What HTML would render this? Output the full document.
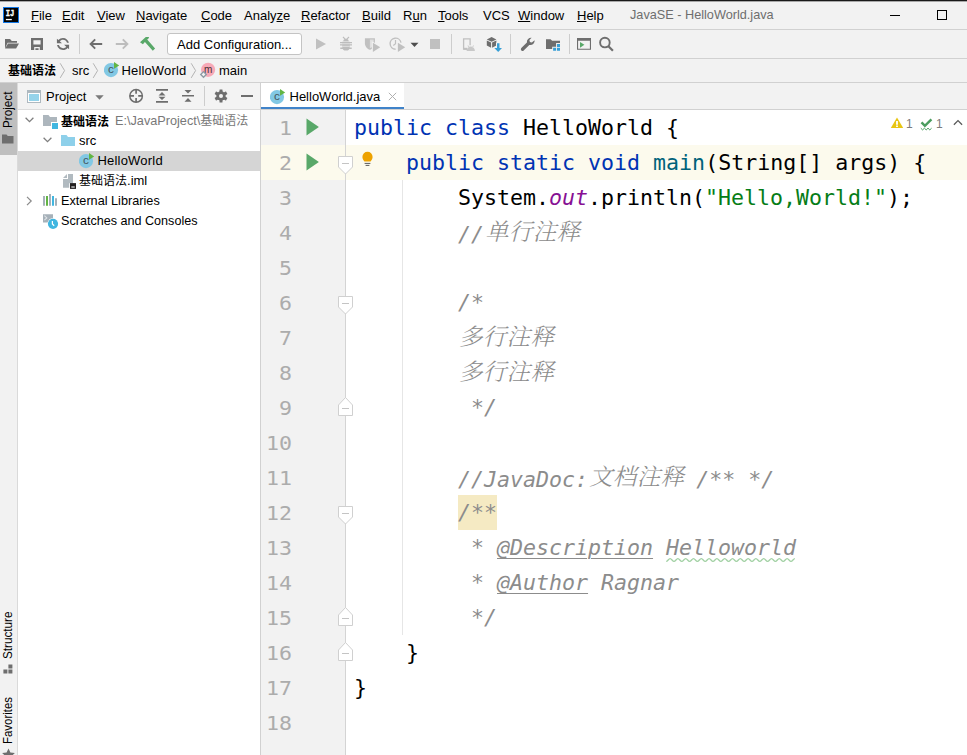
<!DOCTYPE html>
<html lang="zh">
<head>
<meta charset="utf-8">
<title>JavaSE - HelloWorld.java</title>
<style>
html,body{margin:0;padding:0;}
body{width:967px;height:755px;overflow:hidden;background:#f2f2f2;position:relative;
 font-family:"Liberation Sans","Noto Sans CJK SC",sans-serif;font-size:13px;color:#000;}
.abs{position:absolute;}
.hl{position:absolute;height:1px;background:#d1d1d1;left:0;}
.vl{position:absolute;width:1px;background:#d1d1d1;}
u{text-decoration:underline;text-underline-offset:1px;}
/* menu */
#menubar{position:absolute;left:0;top:2px;width:967px;height:27px;}
#menubar span{position:absolute;top:0;line-height:27px;white-space:nowrap;font-size:13px;}
#title{color:#6e6e6e;}
/* toolbar */
#toolbar{position:absolute;left:0;top:30px;width:967px;height:28px;}
#addcfg{position:absolute;left:167px;top:3px;width:135px;height:22px;border:1px solid #c4c4c4;border-radius:3px;background:#fff;
 box-sizing:border-box;font-size:13px;line-height:22px;text-align:center;white-space:nowrap;}
/* nav */
#nav{position:absolute;left:0;top:59px;width:967px;height:23px;}
#nav span{position:absolute;top:0;line-height:23px;white-space:nowrap;font-size:13px;}
/* stripe */
#stripe{position:absolute;left:0;top:83px;width:17px;height:672px;background:#f2f2f2;}
.vtext{position:absolute;white-space:nowrap;transform-origin:0 0;transform:rotate(-90deg) scaleX(.9);font-size:13px;line-height:18px;}
/* project */
#proj{position:absolute;left:18px;top:83px;width:242px;height:672px;background:#fff;}
#projhead{position:absolute;left:0;top:0;width:242px;height:26px;background:#f3f3f3;border-bottom:1px solid #dcdcdc;}
#projin{position:absolute;left:1px;top:0;}
.row{position:absolute;left:-1px;width:242px;height:20px;line-height:20px;font-size:13px;white-space:nowrap;}
.row span{position:absolute;top:0;margin-left:1px;}
.row svg{position:absolute;margin-left:1px;}
/* editor */
#editor{position:absolute;left:261px;top:83px;width:706px;height:672px;background:#fff;}
#tabs{position:absolute;left:0;top:0;width:706px;height:26px;background:#f2f2f2;}
#gutter{position:absolute;left:0;top:27px;width:84px;height:645px;background:#f2f2f2;}
.ln{position:absolute;right:53px;width:60px;text-align:right;color:#acacac;}
pre,.ln{font-family:"DejaVu Sans Mono","Liberation Mono","Noto Sans CJK SC",monospace;font-size:21.6px;line-height:35px;margin:0;}
.ln{height:35px;transform:scaleY(.9);transform-origin:0 25px;}
#code{position:absolute;left:93px;top:27px;}
#code div{height:35px;white-space:pre;}
.k{color:#0033b3;}
.m{color:#00627a;}
.s{color:#067d17;}
.f{color:#871094;font-style:italic;}
.c{color:#8c8c8c;font-style:italic;}
.z{font-family:"Noto Serif CJK SC","Noto Sans CJK SC",serif;font-weight:300;font-size:23.500px;line-height:35px;letter-spacing:.3px;position:relative;top:-2px;left:1px;}
.hb{background:#f5eac3;display:inline-block;height:35px;}
.tag{text-decoration:underline;text-decoration-thickness:1px;text-underline-offset:3px;}
.typo{}
</style>
</head>
<body>
<div class="abs" style="left:0;top:0;width:967px;height:1px;background:#1a1a1a"></div>
<div class="abs" style="left:0;top:1px;width:967px;height:1px;background:#a8a8a8"></div>

<!-- LOGO -->
<svg class="abs" style="left:3px;top:7px" width="16" height="16" viewBox="0 0 16 16"><rect x=".5" y=".5" width="15" height="15" fill="#000" stroke="#1478e6" stroke-width="1"/><text x="2.700" y="8.600" font-family="Liberation Mono,monospace" font-weight="bold" font-size="8.600" fill="#fff" stroke="#fff" stroke-width=".35" textLength="8.500" lengthAdjust="spacingAndGlyphs">IJ</text><rect x="2.900" y="11.900" width="5.900" height="1.300" fill="#fff"/></svg>
<div class="abs" style="left:890px;top:15px;width:10px;height:1px;background:#000"></div>
<div class="abs" style="left:937px;top:10px;width:10px;height:10px;box-sizing:border-box;border:1px solid #000"></div>
<!-- MENU BAR -->
<div id="menubar">
 <span style="left:31px"><u>F</u>ile</span>
 <span style="left:62px"><u>E</u>dit</span>
 <span style="left:97px"><u>V</u>iew</span>
 <span style="left:136px"><u>N</u>avigate</span>
 <span style="left:201px"><u>C</u>ode</span>
 <span style="left:244px">Analy<u>z</u>e</span>
 <span style="left:301px"><u>R</u>efactor</span>
 <span style="left:362px"><u>B</u>uild</span>
 <span style="left:403px">R<u>u</u>n</span>
 <span style="left:438px"><u>T</u>ools</span>
 <span style="left:483px">VCS</span>
 <span style="left:518px"><u>W</u>indow</span>
 <span style="left:577px"><u>H</u>elp</span>
 <span id="title" style="left:630px;font-size:12.700px">JavaSE - HelloWorld.java</span>
</div>
<div class="hl" style="top:29px;width:967px"></div>

<!-- TOOLBAR -->
<div id="toolbar">
 <!-- open -->
 <svg class="abs" style="left:4px;top:6px" width="16" height="16" viewBox="0 0 16 16"><path fill="#6e6e6e" d="M1 12.500V3h5l1.800 1.900H13v1.900H3.600L1 12.500zM4 7.600h11l-2.900 4.900H1.100z"/></svg>
 <!-- save -->
 <svg class="abs" style="left:29px;top:6px" width="16" height="16" viewBox="0 0 16 16"><path fill="#6e6e6e" fill-rule="evenodd" d="M2 2h12v12H2zM4.400 4.200v4.300h7.200V4.200zM5.200 11v3h5.600v-3zM6.400 12.200h3.200V14H6.400z"/></svg>
 <!-- refresh -->
 <svg class="abs" style="left:55px;top:6px" width="16" height="16" viewBox="0 0 16 16"><path fill="#6e6e6e" fill-rule="evenodd" d="M12.570 11.890C11.470 13.180 9.830 14 8 14 5.040 14 2.580 11.860 2.090 9.040l1.860.07C4.430 10.890 6.060 12.200 8 12.200c1.300 0 2.460-.59 3.230-1.520L9.050 8.710h5.040v4.540l-1.520-1.360zM3.430 4.120C4.530 2.820 6.170 2 8 2c2.920 0 5.350 2.090 5.890 4.850l-1.870-.06C11.500 5.060 9.900 3.800 8 3.800c-1.300 0-2.460.59-3.230 1.520l2.190 1.970H1.910V2.750l1.520 1.370z"/></svg>
 <div class="vl" style="left:79px;top:4px;height:20px;background:#cdcdcd"></div>
 <!-- back -->
 <svg class="abs" style="left:88px;top:6px" width="16" height="16" viewBox="0 0 16 16"><path fill="none" stroke="#6e6e6e" stroke-width="1.9" d="M14.2 8H3M7.2 3.4L2.6 8l4.6 4.6"/></svg>
 <!-- forward -->
 <svg class="abs" style="left:114px;top:6px" width="16" height="16" viewBox="0 0 16 16"><path fill="none" stroke="#bdbdbd" stroke-width="1.9" d="M1.8 8H13M8.8 3.4L13.4 8l-4.6 4.6"/></svg>
 <!-- hammer -->
 <svg class="abs" style="left:139px;top:6px" width="18" height="16" viewBox="0 0 18 16"><path fill="#59a869" d="M1 6.300L6.800 1.100h3.300l-.6 1.300-1.300 1.200 7.900 8.800-2.300 2.400L5.900 6l-2 2.300z"/></svg>
 <div id="addcfg">Add Configuration...</div>
 <!-- run -->
 <svg class="abs" style="left:313px;top:6px" width="16" height="16" viewBox="0 0 16 16"><path fill="#c0c0c0" d="M3 2.5l10 5.5-10 5.5z"/></svg>
 <!-- debug -->
 <svg class="abs" style="left:338px;top:6px" width="16" height="16" viewBox="0 0 16 16"><g fill="#bdbdbd"><path d="M5.300 5.300a2.700 2.600 0 0 1 5.400 0z"/><path d="M4.300 5.700h7.400v5.200a3.700 3.700 0 0 1-7.400 0z"/><path d="M2 6h12v1.300H2zM2 8.300h12v1.300H2zM2.300 11.500h11.400v1.400H2.300zM4.600 1.400l.8-.8 2.400 2.400-.8.800zM11.400 1.400l-.8-.8-2.400 2.400.8.800z"/></g><path stroke="#f2f2f2" stroke-width=".7" d="M4.300 7.750h7.400M4.300 10.300h7.400"/></svg>
 <!-- coverage -->
 <svg class="abs" style="left:363px;top:6px" width="18" height="17" viewBox="0 0 18 17"><path fill="#c0c0c0" d="M1.900 2.200h10v5c0 3.500-2.500 5.600-5 6.600-2.500-1-5-3.100-5-6.600z"/><path fill="#e0e0e0" d="M6.900 3.400h3.800v3.800c0 2.400-1.600 4-3.800 5z"/><path fill="#f2f2f2" d="M8.800 5.300l9.200 5v3.700l-9.200 3z"/><path fill="#c0c0c0" d="M9.900 6.700l7.300 4.600-7.300 4.600z"/></svg>
 <!-- profile -->
 <svg class="abs" style="left:387.700px;top:6px" width="18" height="17" viewBox="0 0 18 17"><path fill="none" stroke="#c0c0c0" stroke-width="1.400" d="M7.600 13.200A5.500 5.500 0 1 1 13 6.600"/><path fill="none" stroke="#c0c0c0" stroke-width="1.200" d="M7.500 4v3.800l-2.200 1.700"/><path fill="#c0c0c0" d="M9.900 6.700l7.300 4.600-7.300 4.600z"/></svg>
 <svg class="abs" style="left:410px;top:12px" width="9" height="6" viewBox="0 0 9 6"><path fill="#4d4d4d" d="M.5.800h8L4.500 5z"/></svg>
 <!-- stop -->
 <div class="abs" style="left:430px;top:9px;width:10px;height:10px;background:#c0c0c0"></div>
 <div class="vl" style="left:451px;top:4px;height:20px;background:#cdcdcd"></div>
 <!-- device -->
 <svg class="abs" style="left:461px;top:6px" width="16" height="16" viewBox="0 0 16 16"><path fill="none" stroke="#c0c0c0" stroke-width="1.300" d="M6 13.200H2.600V2.900h6.500v6.300"/><path fill="#c0c0c0" d="M2.600 11.800h3.600v2H2.600z"/><path fill="#c8c8c8" d="M5.600 14.900a4.150 4.300 0 0 1 8.300 0zM6.500 9.700l.6-.4 1.300 1.700-.6.400zM13 9.700l-.6-.4-1.300 1.700.6.400z"/></svg>
 <!-- sdk cube -->
 <svg class="abs" style="left:485px;top:6px" width="18" height="17" viewBox="0 0 18 17"><path fill="#6e6e6e" d="M6.600 1.100l4.800 2.300-4.800 2.300-4.800-2.300zM1.800 4.400l4.300 2.100v5.200L1.800 9.600zM11.400 4.400L7.100 6.500v5.200l4.300-2.100z"/><path fill="#f2f2f2" d="M11 6.600h4v5.500h-4z"/><path fill="#389fd6" d="M12 7.200h2.500v4.900H17L13.200 16 9.300 12.100H12z"/></svg>
 <div class="vl" style="left:510px;top:4px;height:20px;background:#cdcdcd"></div>
 <!-- wrench -->
 <svg class="abs" style="left:520px;top:6px" width="16" height="16" viewBox="0 0 16 16"><path fill="#6e6e6e" d="M14.600 4.200a4.200 4.200 0 0 1-5.300 4.700l-5.600 5.600a1.700 1.700 0 0 1-2.400-2.400l5.600-5.600A4.200 4.200 0 0 1 11.600 1.800L9.400 4l.5 1.900 1.900.5z"/></svg>
 <!-- project structure -->
 <svg class="abs" style="left:545px;top:6px" width="16" height="16" viewBox="0 0 16 16"><path fill="#6e6e6e" d="M1 3.300h4.600l1.500 1.500H15v2.200h-3.900v3.800H7.200V13H1z"/><path fill="#389fd6" d="M12 8h3v3h-3zM8.100 11.800h3v3h-3zM12 11.800h3v3h-3z"/></svg>
 <div class="vl" style="left:569px;top:4px;height:20px;background:#cdcdcd"></div>
 <!-- run anything -->
 <svg class="abs" style="left:576px;top:6px" width="16" height="16" viewBox="0 0 16 16"><path fill="#6e6e6e" fill-rule="evenodd" d="M1 2h14v11.800H1zM2.100 4.700v8h11.800v-8z"/><path fill="#59a869" d="M4 5.900l4.400 2.900L4 11.700z"/></svg>
 <!-- search -->
 <svg class="abs" style="left:598px;top:6px" width="16" height="16" viewBox="0 0 16 16"><circle cx="6.900" cy="6.600" r="4.800" fill="none" stroke="#6e6e6e" stroke-width="1.900"/><path stroke="#6e6e6e" stroke-width="2.200" d="M10.200 10l4.700 4.700"/></svg>
</div>
<div class="hl" style="top:58px;width:967px"></div>

<!-- NAV BAR -->
<div id="nav">
 <span style="left:8px;top:1px;font-weight:bold;font-size:12px">基础语法</span>
 <svg class="abs" style="left:59px;top:4px" width="8" height="16" viewBox="0 0 8 16"><path fill="none" stroke="#b4b4b4" stroke-width="1" d="M1.200 .3l4.400 7.300-4.400 7.300"/></svg>
 <span style="left:72px">src</span>
 <svg class="abs" style="left:92px;top:4px" width="8" height="16" viewBox="0 0 8 16"><path fill="none" stroke="#b4b4b4" stroke-width="1" d="M1.200 .3l4.400 7.300-4.400 7.300"/></svg>
 <svg class="abs" style="left:103.500px;top:3px" width="17" height="17" viewBox="0 0 17 17"><circle cx="7" cy="8.100" r="7.100" fill="#82c8e4"/><path fill="#62b543" d="M10 0l5.200 3.400L10 6.800z"/><text x="3.900" y="10.900" font-family="Liberation Sans,sans-serif" font-size="10.500" fill="#45555c" textLength="5.900" lengthAdjust="spacingAndGlyphs">c</text></svg>
 <span style="left:121.500px;letter-spacing:.15px">HelloWorld</span>
 <svg class="abs" style="left:190px;top:4px" width="8" height="16" viewBox="0 0 8 16"><path fill="none" stroke="#b4b4b4" stroke-width="1" d="M1.200 .3l4.400 7.300-4.400 7.300"/></svg>
 <svg class="abs" style="left:199px;top:3px" width="17" height="17" viewBox="0 0 17 17"><circle cx="9.100" cy="7.800" r="7.100" fill="#f7a9b7"/><text x="4.900" y="10.600" font-family="Liberation Sans,sans-serif" font-size="10" fill="#4a3338">m</text><path fill="#f2f2f2" stroke="#8d9aa4" stroke-width="1.300" d="M4.500 9.600l2.800 2.850-2.800 2.850-2.800-2.850z"/></svg>
 <span style="left:219px">main</span>
</div>
<div class="hl" style="top:82px;width:967px"></div>

<!-- LEFT STRIPE -->
<div id="stripe">
 <div class="abs" style="left:0;top:0;width:17px;height:72px;background:#bfbfbf"></div>
 <div class="vtext" style="left:-1px;top:45px">Project</div>
 <svg class="abs" style="left:2px;top:51px" width="12" height="10" viewBox="0 0 12 10"><path fill="#6e6e6e" d="M0 .5h4.500l1.300 1.600H11.500V9.500H0z"/></svg>
 <div class="vtext" style="left:-1px;top:575.500px">Structure</div>
 <svg class="abs" style="left:3px;top:581px" width="10" height="10" viewBox="0 0 10 10"><path fill="#6e6e6e" d="M5.400 .4h4v4h-4zM.4 5.600h4v4h-4zM5.400 5.600h4v4h-4z"/></svg>
 <div class="vtext" style="left:-1px;top:660.500px;font-size:12.700px">Favorites</div>
 <svg class="abs" style="left:2px;top:665px" width="13" height="13" viewBox="0 0 13 13"><path fill="#6e6e6e" d="M6.500 .4l1.900 4.200 4.500.5-3.400 3 1 4.500-4-2.400-4 2.400 1-4.500-3.400-3 4.500-.5z"/></svg>
</div>
<div class="vl" style="left:17px;top:83px;height:672px;background:#dadada"></div>

<!-- PROJECT PANEL -->
<div id="proj">
 <div id="projhead">
  <svg class="abs" style="left:9px;top:7px" width="14" height="13" viewBox="0 0 14 13"><path fill="#fff" d="M0 0h14v13H0z"/><path fill="#aeb9c0" fill-rule="evenodd" d="M0 0h14v13H0zM1 3v9h12V3z"/><path fill="#95d3ea" d="M2 4h10v7H2z"/></svg>
  <span class="abs" style="left:28px;top:0;line-height:27px;font-size:13px">Project</span>
  <svg class="abs" style="left:77px;top:12px" width="9" height="5" viewBox="0 0 9 5"><path fill="#7a7a7a" d="M.3 .2h8.400L4.500 4.800z"/></svg>
  <!-- locate -->
  <svg class="abs" style="left:110px;top:5px" width="16" height="16" viewBox="0 0 16 16"><circle cx="8.100" cy="7.900" r="6.300" fill="none" stroke="#6e6e6e" stroke-width="1.500"/><path stroke="#6e6e6e" stroke-width="1.700" d="M8.100 1.600v4.200M8.100 10v4.200M1.800 7.900H6M10.200 7.900h4.200"/></svg>
  <!-- expand all -->
  <svg class="abs" style="left:136px;top:5px" width="16" height="16" viewBox="0 0 16 16"><path fill="#6e6e6e" d="M2 1.100h12v1.700H2zM2 13.100h12v1.700H2zM8 4l3.500 3.500h-7zM8 12l3.500-3.300h-7z"/></svg>
  <!-- collapse all -->
  <svg class="abs" style="left:162px;top:5px" width="16" height="16" viewBox="0 0 16 16"><path fill="#6e6e6e" d="M2 6.900h12v1.700H2zM8 5.400l3.500-3.500h-7zM8 10.100l3.500 3.600h-7z"/></svg>
  <div class="vl" style="left:186px;top:3px;height:20px;background:#cdcdcd"></div>
  <!-- gear -->
  <svg class="abs" style="left:195px;top:5px" width="16" height="16" viewBox="0 0 16 16"><g transform="translate(8 8)"><g fill="#6e6e6e"><rect x="-1.500" y="-6.600" width="3" height="13.200" rx=".4"/><rect x="-1.500" y="-6.600" width="3" height="13.200" rx=".4" transform="rotate(60)"/><rect x="-1.500" y="-6.600" width="3" height="13.200" rx=".4" transform="rotate(120)"/><circle r="4.700"/></g><circle r="2" fill="#f2f2f2"/></g></svg>
  <!-- hide -->
  <div class="abs" style="left:223px;top:12px;width:12px;height:2px;background:#6e6e6e"></div>
 </div>
 <div id="projin">
 <div class="row" style="top:28px">
  <svg style="left:6px;top:6.300px" width="9" height="6" viewBox="0 0 9 6"><path fill="none" stroke="#7f7f7f" stroke-width="1.300" d="M.6 .8l3.900 3.900L8.400 .8"/></svg>
  <svg style="left:24px;top:3px" width="16" height="15" viewBox="0 0 16 15"><path fill="#adb6bd" d="M0 1h5.500l1.500 2H14v5H8v4H0z"/><path fill="#40b6e0" d="M9 9h6v6H9z"/></svg>
  <span style="left:42px;top:1px;font-weight:bold;font-size:12px">基础语法</span><span style="left:96px;color:#787878;font-size:12.700px">E:\JavaProject\<span style="position:static;margin:0;font-size:12px">基础语法</span></span>
 </div>
 <div class="row" style="top:48px">
  <svg style="left:24px;top:6.300px" width="9" height="6" viewBox="0 0 9 6"><path fill="none" stroke="#7f7f7f" stroke-width="1.300" d="M.6 .8l3.900 3.900L8.400 .8"/></svg>
  <svg style="left:42px;top:4px" width="15" height="12" viewBox="0 0 15 12"><path fill="#8ed0ea" d="M0 0h5.500L7 2h7v9H0z"/></svg>
  <span style="left:60px">src</span>
 </div>
 <div class="row" style="top:68px;background:#d5d5d5">
  <svg style="left:60px;top:2px" width="17" height="17" viewBox="0 0 17 17"><circle cx="7" cy="8.100" r="7.100" fill="#82c8e4"/><path fill="#62b543" d="M10 0l5.200 3.400L10 6.800z"/><text x="3.900" y="10.900" font-family="Liberation Sans,sans-serif" font-size="10.500" fill="#45555c" textLength="5.900" lengthAdjust="spacingAndGlyphs">c</text></svg>
  <span style="left:78.500px;letter-spacing:.2px">HelloWorld</span>
 </div>
 <div class="row" style="top:88px">
  <svg style="left:43px;top:3px" width="15" height="16" viewBox="0 0 15 16"><path fill="#b1bac0" d="M6 0h5v9.200H7.200v4.500H1V5h5z"/><path fill="#b1bac0" d="M5 0v4H1z"/><path fill="#231f20" d="M8 9.100h6v5.800H8z"/><path fill="#e8e8e8" d="M9.300 12.400h3.400v1.200H9.300z"/></svg>
  <span style="left:60px"><span style="position:static;margin:0;font-size:12px">基础语法</span>.iml</span>
 </div>
 <div class="row" style="top:108px">
  <svg style="left:7px;top:5px" width="7" height="10" viewBox="0 0 7 10"><path fill="none" stroke="#8a8a8a" stroke-width="1.200" d="M1 .8l4.200 4.200L1 9.200"/></svg>
  <svg style="left:24px;top:3px" width="16" height="14" viewBox="0 0 16 14"><path fill="#a6b1b9" d="M0 2.100h2v9.600H0zM6 0h2v11.700H6zM12 4.300h2v7.400h-2z"/><path fill="#62b543" d="M3 2.100h2v9.600H3z"/><path fill="#40b6e0" d="M9 2.100h2v9.600H9z"/></svg>
  <span style="left:42px;font-size:12.700px">External Libraries</span>
 </div>
 <div class="row" style="top:128px">
  <svg style="left:23px;top:1px" width="17" height="17" viewBox="0 0 17 17"><path fill="#a6b1b9" d="M1 2.300h10v4A5.700 5.700 0 0 0 5.600 10.500H1z"/><path fill="none" stroke="#dfe3e6" stroke-width="1.100" d="M2.400 3.700l2.400 2.200-2.400 2.200"/><circle cx="11" cy="11.800" r="5.100" fill="#40b6e0"/><path fill="none" stroke="#fff" stroke-width="1.200" d="M10.400 9v3l1.800 1.700"/></svg>
  <span style="left:42px;font-size:12.600px">Scratches and Consoles</span>
 </div>
 </div>
</div>
<div class="vl" style="left:260px;top:83px;height:672px"></div>

<!-- EDITOR -->
<div id="editor">
 <div id="tabs">
  <div class="abs" style="left:0;top:0;width:143px;height:26px;background:#fff"></div>
  <svg class="abs" style="left:9px;top:6px" width="17" height="17" viewBox="0 0 17 17"><circle cx="7" cy="8.100" r="7.100" fill="#82c8e4"/><path fill="#62b543" d="M10 0l5.200 3.400L10 6.800z"/><text x="3.900" y="10.900" font-family="Liberation Sans,sans-serif" font-size="10.500" fill="#45555c" textLength="5.900" lengthAdjust="spacingAndGlyphs">c</text></svg>
  <span class="abs" style="left:28.500px;top:0;line-height:27px;font-size:13px">HelloWorld.java</span>
  <svg class="abs" style="left:127px;top:9px" width="9" height="9" viewBox="0 0 9 9"><path fill="none" stroke="#b0b0b0" stroke-width="1" d="M.8 .8l7.400 7.400M8.200 .8L.8 8.200"/></svg>
  <div class="abs" style="left:0;top:24px;width:143px;height:3px;background:#4083c9"></div>
 </div>
 <div class="abs" style="left:0;top:26px;width:706px;height:1px;background:#d1d1d1"></div>
 <div class="abs" style="left:0;top:62px;width:706px;height:35px;background:#fcfaed"></div>
 <div id="gutter">
  <div class="ln" style="top:0px">1</div>
  <div class="ln" style="top:35px">2</div>
  <div class="ln" style="top:70px">3</div>
  <div class="ln" style="top:105px">4</div>
  <div class="ln" style="top:140px">5</div>
  <div class="ln" style="top:175px">6</div>
  <div class="ln" style="top:210px">7</div>
  <div class="ln" style="top:245px">8</div>
  <div class="ln" style="top:280px">9</div>
  <div class="ln" style="top:315px">10</div>
  <div class="ln" style="top:350px">11</div>
  <div class="ln" style="top:385px">12</div>
  <div class="ln" style="top:420px">13</div>
  <div class="ln" style="top:455px">14</div>
  <div class="ln" style="top:490px">15</div>
  <div class="ln" style="top:525px">16</div>
  <div class="ln" style="top:560px">17</div>
  <div class="ln" style="top:595px">18</div>
  <svg class="abs" style="left:45px;top:8px" width="14" height="18" viewBox="0 0 14 18"><path fill="#59a869" d="M.5 .4l12.400 8.600L.5 17.600z"/></svg>
  <svg class="abs" style="left:45px;top:43px" width="14" height="18" viewBox="0 0 14 18"><path fill="#59a869" d="M.5 .4l12.400 8.600L.5 17.600z"/></svg>
 </div>
 <div class="abs" style="left:0;top:62px;width:84px;height:35px;background:#fcfaed"></div>
 <div class="ln" style="top:62px;right:auto;left:-29px">2</div>
 <svg class="abs" style="left:45px;top:70px" width="14" height="18" viewBox="0 0 14 18"><path fill="#59a869" d="M.5 .4l12.400 8.600L.5 17.600z"/></svg>
 <div class="vl" style="left:84px;top:27px;height:645px;background:#d4d4d4"></div>
 <!-- indent guide -->
 <div class="vl" style="left:141px;top:97px;height:455px;background:#e6e6e6"></div>
 <!-- fold markers -->
 <svg class="abs" style="left:76px;top:27px" width="17" height="645" viewBox="0 0 17 645">
  <g fill="#fff" stroke="#d0d0d0" stroke-width="1">
   <path d="M1.500 46.500h14V57l-7 7-7-7z"/>
   <path d="M1.500 186.500h14V197l-7 7-7-7z"/>
   <path d="M1.500 396.500h14V407l-7 7-7-7z"/>
   <path d="M1.500 305.500h14V295l-7-7.500-7 7.500z"/>
   <path d="M1.500 515.500h14V505l-7-7.500-7 7.500z"/>
   <path d="M1.500 550.500h14V540l-7-7.500-7 7.500z"/>
  </g>
  <g fill="none" stroke="#c4c4c4" stroke-width="1">
   <path d="M5 53.500h7M5 193.500h7M5 403.500h7M5 298.500h7M5 508.500h7M5 543.500h7"/>
  </g>
 </svg>
 <!-- bulb -->
 <svg class="abs" style="left:100.400px;top:68px" width="13" height="16" viewBox="0 0 13 16"><path fill="#eda200" d="M6.500 .8a5.100 5.100 0 0 1 5.100 5.100c0 1.900-1.100 3-2 4.700H3.400c-.9-1.700-2-2.800-2-4.700A5.100 5.100 0 0 1 6.500 .8z"/><path stroke="#5a5a5a" stroke-width="1" d="M3.600 12.400h5.800M4.600 14.400h3.800"/></svg>
 <!-- typo wave -->
 <svg class="abs" style="left:404px;top:473px" width="134" height="8" viewBox="0 0 134 8"><path fill="none" stroke="#a2d1a4" stroke-width="1.300" d="M1.20 5.400C2.76 5.4 3.54 2.6 5.10 2.6C6.66 2.6 7.44 5.4 9.00 5.4C10.56 5.4 11.34 2.6 12.90 2.6C14.46 2.6 15.24 5.4 16.80 5.4C18.36 5.4 19.14 2.6 20.70 2.6C22.26 2.6 23.04 5.4 24.60 5.4C26.16 5.4 26.94 2.6 28.50 2.6C30.06 2.6 30.84 5.4 32.40 5.4C33.96 5.4 34.74 2.6 36.30 2.6C37.86 2.6 38.64 5.4 40.20 5.4C41.76 5.4 42.54 2.6 44.10 2.6C45.66 2.6 46.44 5.4 48.00 5.4C49.56 5.4 50.34 2.6 51.90 2.6C53.46 2.6 54.24 5.4 55.80 5.4C57.36 5.4 58.14 2.6 59.70 2.6C61.26 2.6 62.04 5.4 63.60 5.4C65.16 5.4 65.94 2.6 67.50 2.6C69.06 2.6 69.84 5.4 71.40 5.4C72.96 5.4 73.74 2.6 75.30 2.6C76.86 2.6 77.64 5.4 79.20 5.4C80.76 5.4 81.54 2.6 83.10 2.6C84.66 2.6 85.44 5.4 87.00 5.4C88.56 5.4 89.34 2.6 90.90 2.6C92.46 2.6 93.24 5.4 94.80 5.4C96.36 5.4 97.14 2.6 98.70 2.6C100.26 2.6 101.04 5.4 102.60 5.4C104.16 5.4 104.94 2.6 106.50 2.6C108.06 2.6 108.84 5.4 110.40 5.4C111.96 5.4 112.74 2.6 114.30 2.6C115.86 2.6 116.64 5.4 118.20 5.4C119.76 5.4 120.54 2.6 122.10 2.6C123.66 2.6 124.44 5.4 126.00 5.4C127.56 5.4 128.34 2.6 129.90 2.6"/></svg>
 <!-- inspections widget -->
 <svg class="abs" style="left:629px;top:33px" width="14" height="13" viewBox="0 0 14 13"><path fill="#e8c512" d="M7 1.400l6.200 10.600H.8z"/><path fill="#fff" d="M6.100 5h1.800v3.800H6.100zM6.100 9.600h1.800v1.400H6.100z"/></svg>
 <span class="abs" style="left:645px;top:35px;font-size:12px;line-height:13px;color:#7a7a7a">1</span>
 <svg class="abs" style="left:659px;top:34px" width="14" height="14" viewBox="0 0 14 14"><path fill="none" stroke="#4b9d5f" stroke-width="2.500" d="M1.500 5.400l3.400 3.400L11.400 2.300"/><path fill="none" stroke="#4b9d5f" stroke-width="1" d="M.8 11.200l1.800 1.700 1.800-1.700 1.800 1.700L8 11.200l1.800 1.700 1.800-1.700"/></svg>
 <span class="abs" style="left:675px;top:35px;font-size:12px;line-height:13px;color:#7a7a7a">1</span>
 <svg class="abs" style="left:692px;top:36px" width="10" height="7" viewBox="0 0 10 7"><path fill="none" stroke="#5a5a5a" stroke-width="1.300" d="M.9 5.800L5 1.600l4.100 4.200"/></svg>
 <pre id="code"><div><span class="k">public</span> <span class="k">class</span> HelloWorld {</div><div>    <span class="k">public</span> <span class="k">static</span> <span class="k">void</span> <span class="m">main</span>(String[] args) {</div><div>        System.<span class="f">out</span>.println(<span class="s">"Hello,World!"</span>);</div><div>        <span class="c">//<span class="z">单行注释</span></span></div><div> </div><div>        <span class="c">/*</span></div><div>        <span class="c"><span class="z">多行注释</span></span></div><div>        <span class="c"><span class="z">多行注释</span></span></div><div>        <span class="c"> */</span></div><div> </div><div>        <span class="c">//JavaDoc:<span class="z">文档注释</span> /** */</span></div><div>        <span class="c"><span class="hb">/**</span></span></div><div>        <span class="c"> * <span class="tag">@Description</span> <span class="typo">Helloworld</span></span></div><div>        <span class="c"> * <span class="tag">@Author</span> Ragnar</span></div><div>        <span class="c"> */</span></div><div>    }</div><div>}</div><div> </div></pre>
</div>
</body>
</html>
